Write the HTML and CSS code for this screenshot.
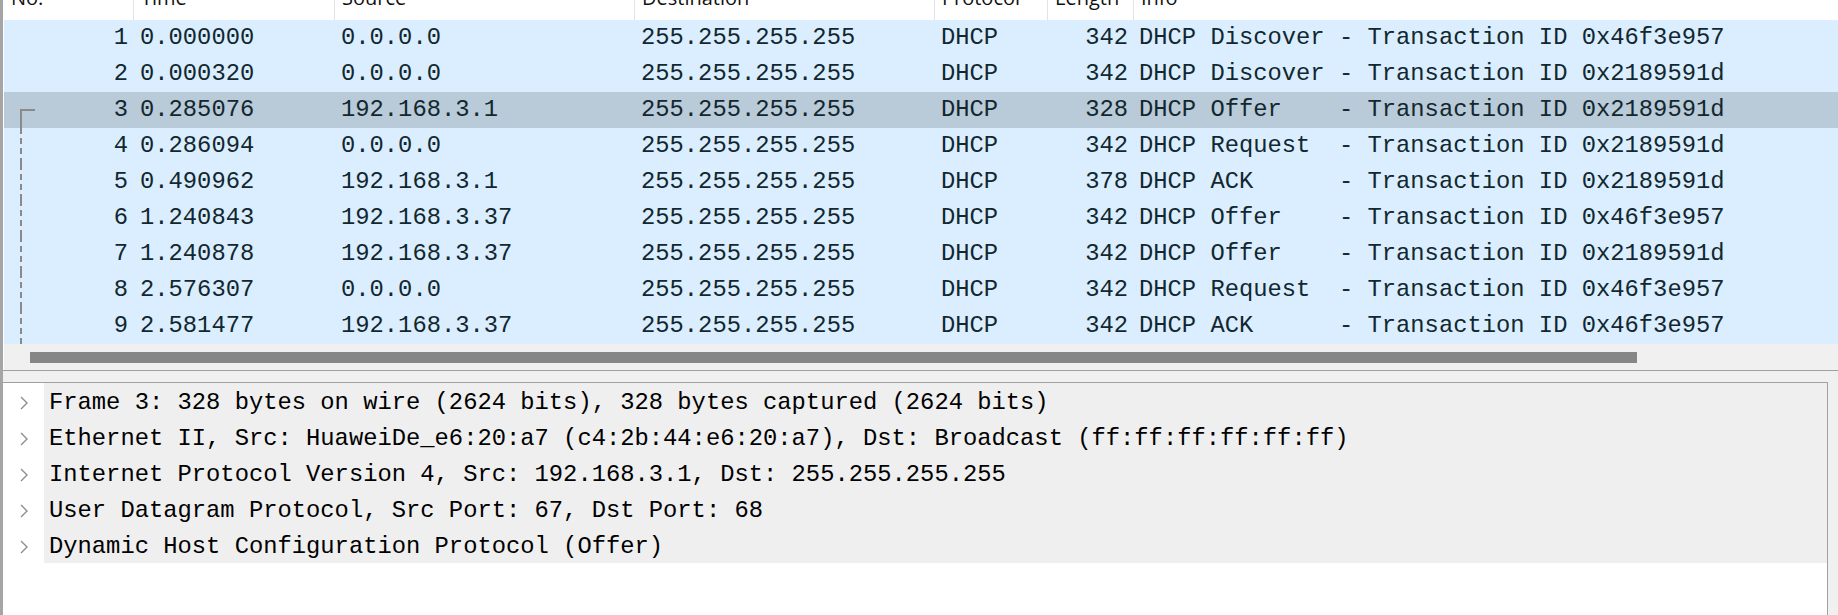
FILE: index.html
```html
<!DOCTYPE html>
<html>
<head>
<meta charset="utf-8">
<link rel="stylesheet" href="styles.css">
</head>
<body>
<div class="app">
  <section class="packet-list">
    <div class="thead">
      <div class="th"><span>No.</span></div>
      <div class="th"><span>Time</span></div>
      <div class="th"><span>Source</span></div>
      <div class="th"><span>Destination</span></div>
      <div class="th"><span>Protocol</span></div>
      <div class="th"><span>Length</span></div>
      <div class="th last"><span>Info</span></div>
    </div>
    <div class="tbody">
      <div class="tr"><span class="td num">1</span><span class="td">0.000000</span><span class="td">0.0.0.0</span><span class="td">255.255.255.255</span><span class="td">DHCP</span><span class="td num">342</span><span class="td info">DHCP Discover - Transaction ID 0x46f3e957</span></div>
      <div class="tr"><span class="td num">2</span><span class="td">0.000320</span><span class="td">0.0.0.0</span><span class="td">255.255.255.255</span><span class="td">DHCP</span><span class="td num">342</span><span class="td info">DHCP Discover - Transaction ID 0x2189591d</span></div>
      <div class="tr selected"><span class="td num rel-first">3</span><span class="td">0.285076</span><span class="td">192.168.3.1</span><span class="td">255.255.255.255</span><span class="td">DHCP</span><span class="td num">328</span><span class="td info">DHCP Offer    - Transaction ID 0x2189591d</span></div>
      <div class="tr"><span class="td num rel">4</span><span class="td">0.286094</span><span class="td">0.0.0.0</span><span class="td">255.255.255.255</span><span class="td">DHCP</span><span class="td num">342</span><span class="td info">DHCP Request  - Transaction ID 0x2189591d</span></div>
      <div class="tr"><span class="td num rel">5</span><span class="td">0.490962</span><span class="td">192.168.3.1</span><span class="td">255.255.255.255</span><span class="td">DHCP</span><span class="td num">378</span><span class="td info">DHCP ACK      - Transaction ID 0x2189591d</span></div>
      <div class="tr"><span class="td num rel">6</span><span class="td">1.240843</span><span class="td">192.168.3.37</span><span class="td">255.255.255.255</span><span class="td">DHCP</span><span class="td num">342</span><span class="td info">DHCP Offer    - Transaction ID 0x46f3e957</span></div>
      <div class="tr"><span class="td num rel">7</span><span class="td">1.240878</span><span class="td">192.168.3.37</span><span class="td">255.255.255.255</span><span class="td">DHCP</span><span class="td num">342</span><span class="td info">DHCP Offer    - Transaction ID 0x2189591d</span></div>
      <div class="tr"><span class="td num rel">8</span><span class="td">2.576307</span><span class="td">0.0.0.0</span><span class="td">255.255.255.255</span><span class="td">DHCP</span><span class="td num">342</span><span class="td info">DHCP Request  - Transaction ID 0x46f3e957</span></div>
      <div class="tr"><span class="td num rel">9</span><span class="td">2.581477</span><span class="td">192.168.3.37</span><span class="td">255.255.255.255</span><span class="td">DHCP</span><span class="td num">342</span><span class="td info">DHCP ACK      - Transaction ID 0x46f3e957</span></div>
    </div>
    <div class="hscroll"><div class="thumb"></div></div>
  </section>
  <div class="splitter"></div>
  <section class="details">
    <div class="tree-row"><span class="exp"><svg width="8" height="14" viewBox="0 0 8 14"><polyline points="1,1 7,7 1,13" fill="none" stroke="#8d8d8d" stroke-width="1.4"/></svg></span><span class="label">Frame 3: 328 bytes on wire (2624 bits), 328 bytes captured (2624 bits)</span></div>
    <div class="tree-row"><span class="exp"><svg width="8" height="14" viewBox="0 0 8 14"><polyline points="1,1 7,7 1,13" fill="none" stroke="#8d8d8d" stroke-width="1.4"/></svg></span><span class="label">Ethernet II, Src: HuaweiDe_e6:20:a7 (c4:2b:44:e6:20:a7), Dst: Broadcast (ff:ff:ff:ff:ff:ff)</span></div>
    <div class="tree-row"><span class="exp"><svg width="8" height="14" viewBox="0 0 8 14"><polyline points="1,1 7,7 1,13" fill="none" stroke="#8d8d8d" stroke-width="1.4"/></svg></span><span class="label">Internet Protocol Version 4, Src: 192.168.3.1, Dst: 255.255.255.255</span></div>
    <div class="tree-row"><span class="exp"><svg width="8" height="14" viewBox="0 0 8 14"><polyline points="1,1 7,7 1,13" fill="none" stroke="#8d8d8d" stroke-width="1.4"/></svg></span><span class="label">User Datagram Protocol, Src Port: 67, Dst Port: 68</span></div>
    <div class="tree-row"><span class="exp"><svg width="8" height="14" viewBox="0 0 8 14"><polyline points="1,1 7,7 1,13" fill="none" stroke="#8d8d8d" stroke-width="1.4"/></svg></span><span class="label">Dynamic Host Configuration Protocol (Offer)</span></div>
  </section>
</div>
</body>
</html>
```

FILE: styles.css
```css
html, body {
  margin: 0;
  padding: 0;
}
body {
  width: 1838px;
  height: 615px;
  overflow: hidden;
  background: #f0f0f0;
  font-family: "Liberation Mono", monospace;
}
.app {
  display: flex;
  flex-direction: column;
  height: 615px;
  border-left: 3px solid #a5a5a5;
  box-sizing: border-box;
}
.packet-list {
  background: #ffffff;
  padding-left: 1px;
  border-bottom: 1px solid #a0a0a0;
}
.thead,
.tr {
  display: grid;
  grid-template-columns: 130px 201px 300px 300px 113px 86px 1fr;
}
.thead {
  height: 20px;
  background: #ffffff;
  overflow: hidden;
}
.th {
  border-right: 1px solid #e3e3e3;
  padding-left: 7px;
  overflow: hidden;
  font-family: "Open Sans", "Noto Sans", sans-serif;
  font-size: 20px;
  color: #111;
}
.th.last {
  border-right: none;
}
.th span {
  display: block;
  line-height: 20px;
  margin-top: -12px;
}
.tr {
  height: 36px;
  background: #daeeff;
  color: #12272e;
  font-size: 23.8px;
  line-height: 36px;
}
.tr.selected {
  background: #b9cad8;
}
.td {
  padding: 0 6px;
  white-space: pre;
  overflow: hidden;
}
.td.num {
  text-align: right;
}
.td.info {
  padding-left: 5px;
}
.td.rel-first,
.td.rel {
  position: relative;
}
.td.rel-first::before {
  content: "";
  position: absolute;
  left: 16px;
  top: 17px;
  bottom: 0;
  width: 13px;
  border-top: 2px solid #8a8a8a;
  border-left: 2px solid #8a8a8a;
}
.td.rel::before {
  content: "";
  position: absolute;
  left: 16px;
  top: 0;
  bottom: 0;
  border-left: 2px dashed #8a8a8a;
}
.hscroll {
  height: 26px;
  background: #f0f0f0;
  padding-top: 8px;
  padding-left: 26px;
  box-sizing: border-box;
}
.thumb {
  width: 1607px;
  height: 11px;
  background: #868686;
}
.splitter {
  height: 11px;
  flex: none;
}
.details {
  flex: 1;
  background: #ffffff;
  border-top: 1px solid #a0a0a0;
  border-right: 1px solid #a0a0a0;
  margin-right: 10px;
  padding-left: 1px;
}
.tree-row {
  display: flex;
  height: 36px;
}
.exp {
  width: 40px;
  flex: none;
  display: flex;
  align-items: center;
  padding-left: 16px;
  padding-top: 4px;
  box-sizing: border-box;
}
.exp svg {
  display: block;
}
.label {
  flex: 1;
  background: #efefef;
  font-size: 23.8px;
  line-height: 36px;
  padding-top: 2px;
  padding-left: 5px;
  box-sizing: border-box;
  color: #000;
  white-space: pre;
  overflow: hidden;
}
```
